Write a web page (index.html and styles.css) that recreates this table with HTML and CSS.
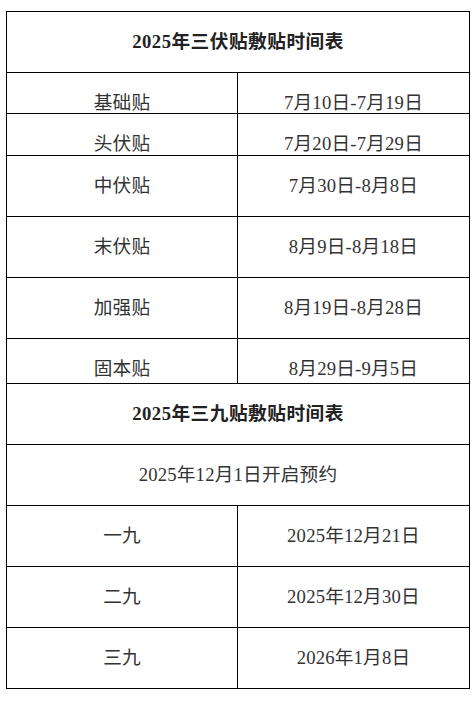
FILE: index.html
```html
<!DOCTYPE html>
<html lang="zh-CN">
<head>
<meta charset="utf-8">
<title>2025年三伏贴敷贴时间表</title>
<link rel="stylesheet" href="styles.css">
</head>
<body>
<div class="table">
  <div class="row h61"><div class="cell full title">2025年三伏贴敷贴时间表</div></div>
  <div class="row h41"><div class="cell">基础贴</div><div class="cell">7月10日-7月19日</div></div>
  <div class="row h42"><div class="cell">头伏贴</div><div class="cell">7月20日-7月29日</div></div>
  <div class="row h61"><div class="cell">中伏贴</div><div class="cell">7月30日-8月8日</div></div>
  <div class="row h61"><div class="cell">末伏贴</div><div class="cell">8月9日-8月18日</div></div>
  <div class="row h61"><div class="cell">加强贴</div><div class="cell">8月19日-8月28日</div></div>
  <div class="row h45"><div class="cell">固本贴</div><div class="cell">8月29日-9月5日</div></div>
  <div class="row h61"><div class="cell full title">2025年三九贴敷贴时间表</div></div>
  <div class="row h61"><div class="cell full">2025年12月1日开启预约</div></div>
  <div class="row h61"><div class="cell">一九</div><div class="cell">2025年12月21日</div></div>
  <div class="row h61"><div class="cell">二九</div><div class="cell">2025年12月30日</div></div>
  <div class="row h61"><div class="cell">三九</div><div class="cell">2026年1月8日</div></div>
</div>
</body>
</html>
```
FILE: styles.css
```css
html, body {
  margin: 0;
  padding: 0;
  background: #ffffff;
}
body {
  padding: 11px 6px 0 6px;
  font-family: "Liberation Serif", "Noto Sans CJK SC", serif;
  font-size: 18.67px;
  color: #333333;
}
.table {
  width: 464px;
  box-sizing: border-box;
  border-top: 1px solid #000;
  border-left: 1px solid #000;
  border-right: 1px solid #000;
}
.row {
  display: grid;
  grid-template-columns: 1fr 1fr;
  box-sizing: border-box;
  border-bottom: 1px solid #000;
  overflow: hidden;
}
.h61 { height: 61px; }
.h41 { height: 41px; }
.h42 { height: 42px; }
.h45 { height: 45px; }
.cell {
  text-align: center;
  line-height: 60px;
  height: 60px;
  white-space: nowrap;
  letter-spacing: 0.2px;
}
.cell:first-child:not(.full) {
  border-right: 1px solid #000;
}
.full {
  grid-column: 1 / 3;
}
.title {
  font-weight: bold;
  color: #222222;
  letter-spacing: 0.5px;
}
```
